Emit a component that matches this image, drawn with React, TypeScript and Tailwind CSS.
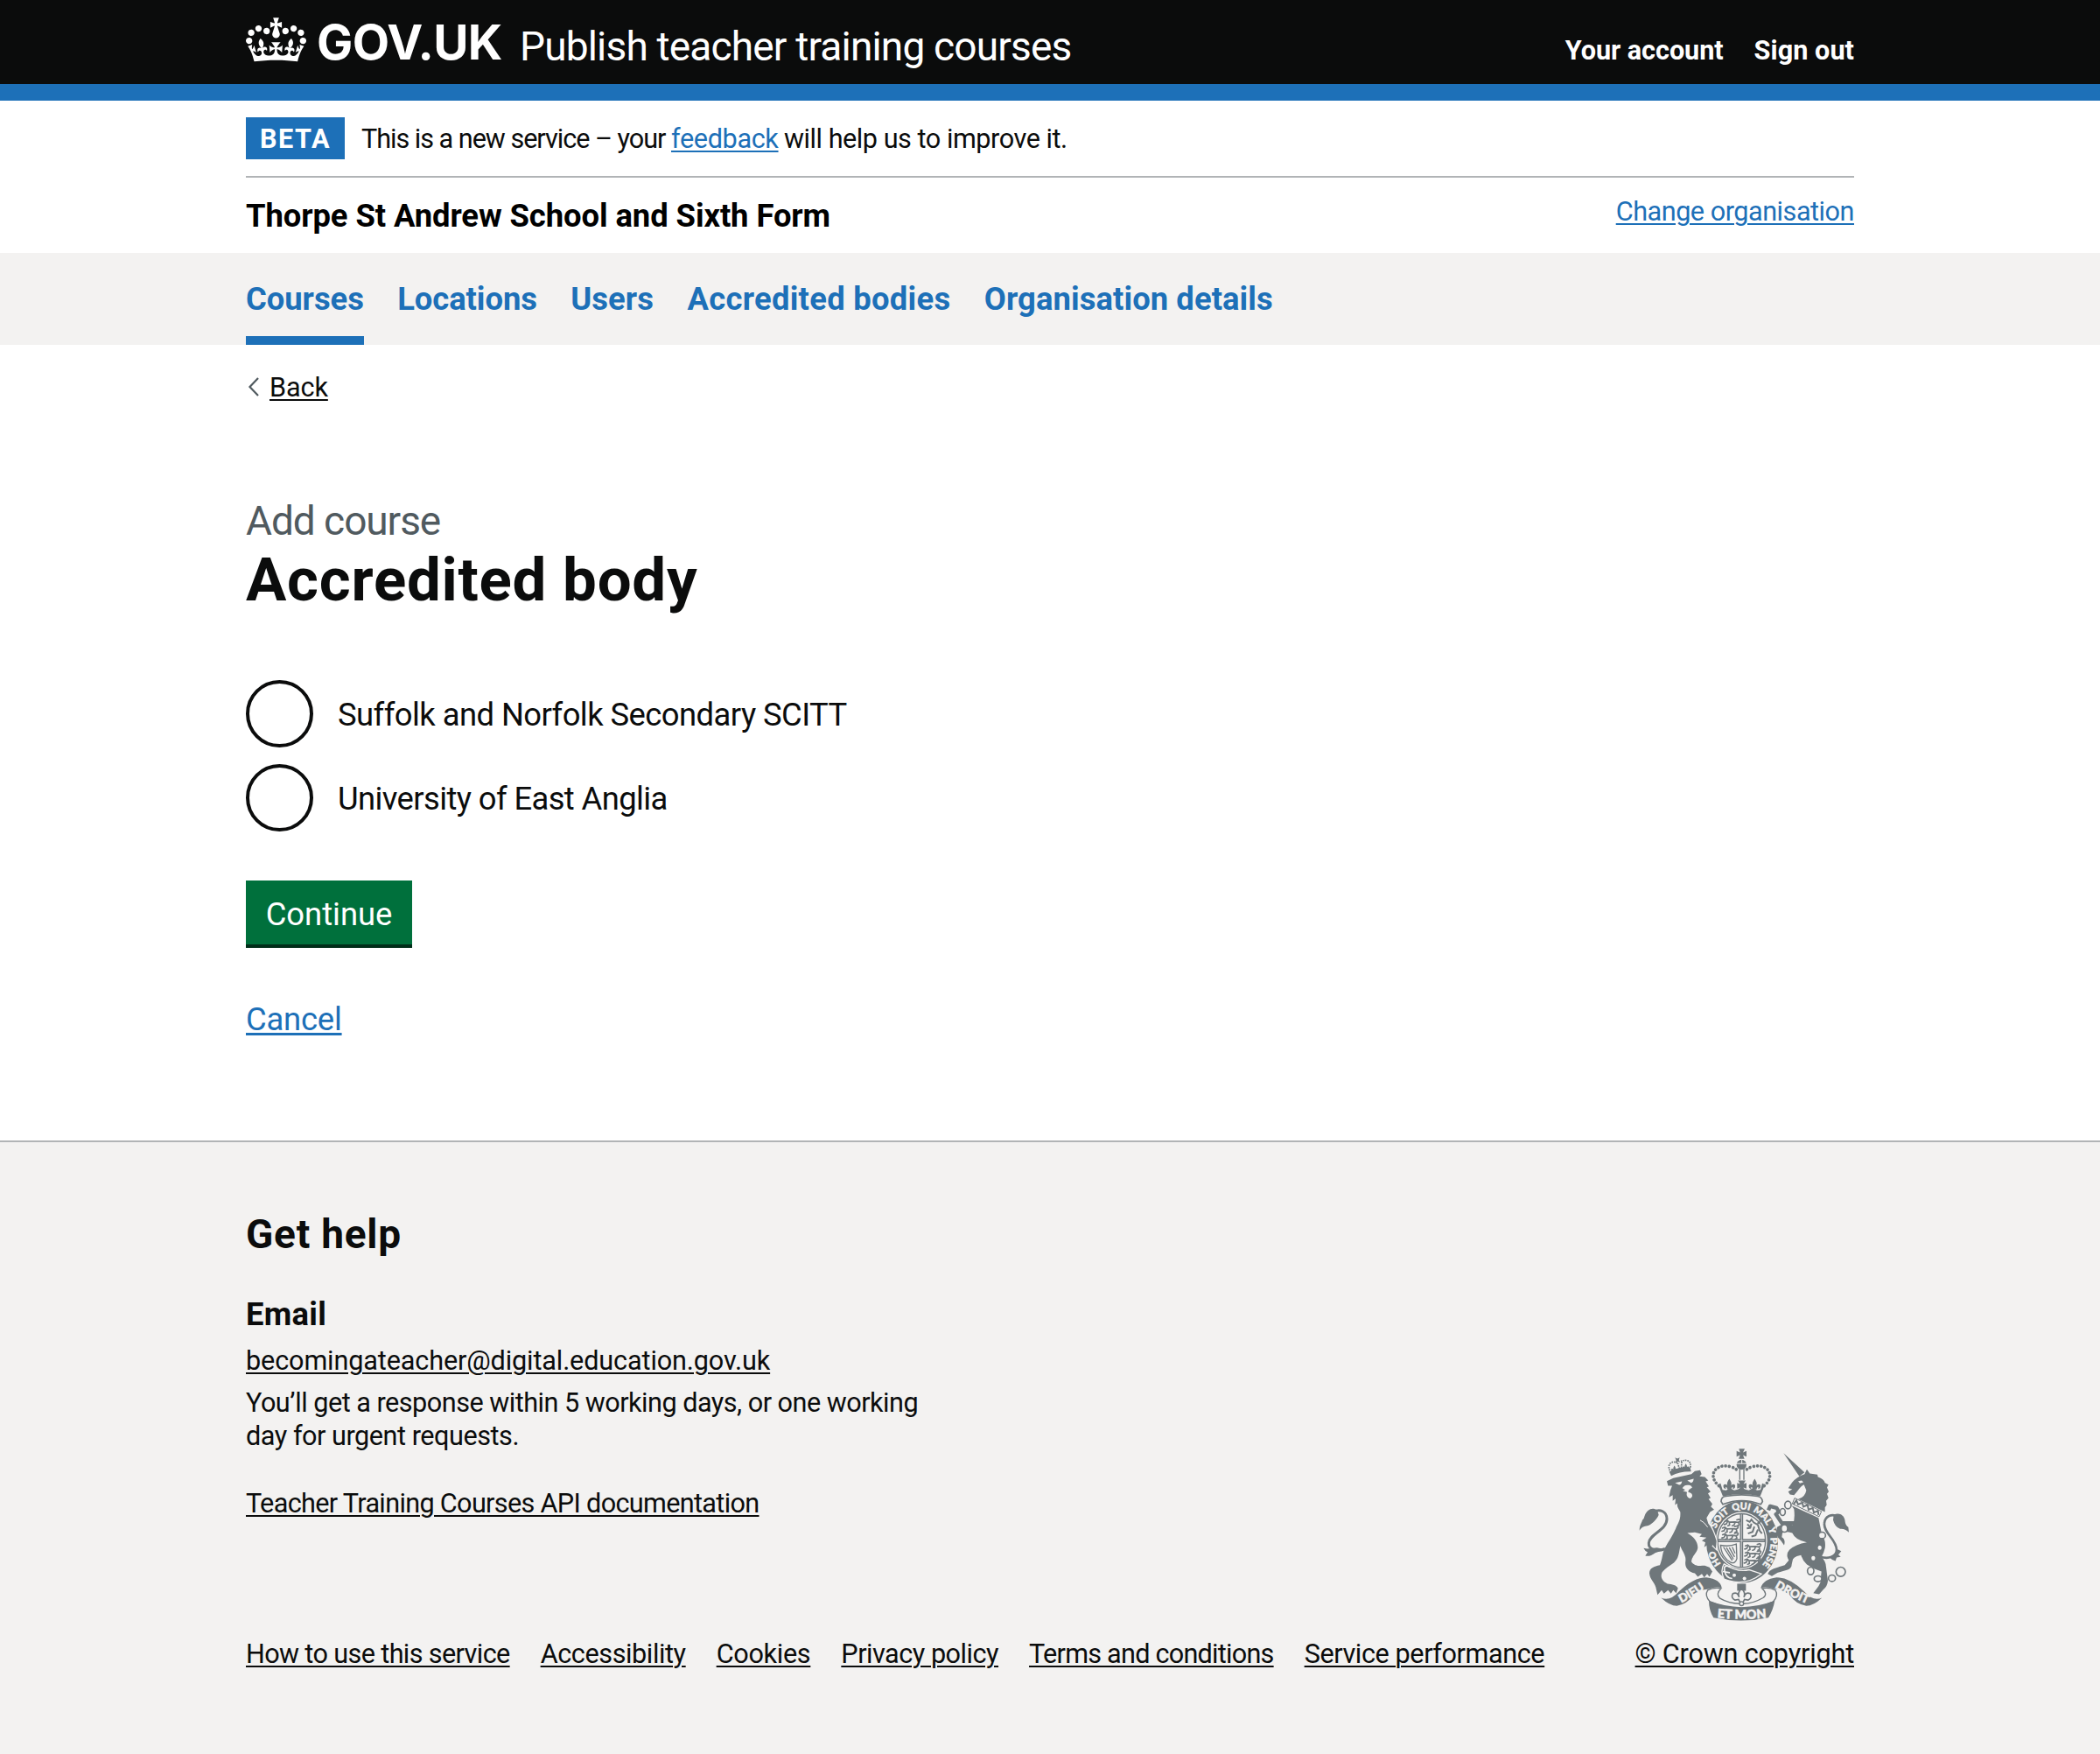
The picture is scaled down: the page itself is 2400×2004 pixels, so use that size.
import React from "react";

const link = "underline decoration-2 underline-offset-[3px]";

function Crown() {
  return (
    <svg viewBox="0 0 132 97" className="mt-5 h-[51px] w-[69px] shrink-0 fill-white" aria-hidden="true">
      <path
        fillRule="evenodd"
        d="M25 30.2c3.5 1.5 7.7-.2 9.1-3.7 1.5-3.6-.2-7.8-3.9-9.2-3.6-1.4-7.6.3-9.1 3.9-1.4 3.5.3 7.5 3.9 9zM9 39.5c3.6 1.5 7.8-.2 9.2-3.7 1.5-3.6-.2-7.8-3.9-9.1-3.6-1.5-7.6.2-9.1 3.8-1.4 3.5.3 7.5 3.8 9zM4.4 57.2c3.5 1.5 7.7-.2 9.1-3.8 1.5-3.6-.2-7.7-3.9-9.1-3.5-1.5-7.6.3-9.1 3.8-1.4 3.5.3 7.6 3.9 9.1zm38.3-21.4c3.5 1.5 7.7-.2 9.1-3.8 1.5-3.6-.2-7.7-3.9-9.1-3.6-1.5-7.6.3-9.1 3.8-1.3 3.6.4 7.7 3.9 9.1zm64.4-5.6c-3.6 1.5-7.8-.2-9.1-3.7-1.5-3.6.2-7.8 3.8-9.2 3.6-1.4 7.7.3 9.2 3.9 1.3 3.5-.4 7.5-3.9 9zm15.9 9.3c-3.6 1.5-7.7-.2-9.1-3.7-1.5-3.6.2-7.8 3.7-9.1 3.6-1.5 7.7.2 9.2 3.8 1.5 3.5-.3 7.5-3.8 9zm4.7 17.7c-3.6 1.5-7.8-.2-9.2-3.8-1.5-3.6.2-7.7 3.9-9.1 3.6-1.5 7.7.3 9.2 3.8 1.3 3.5-.4 7.6-3.9 9.1zM89.3 35.8c-3.6 1.5-7.8-.2-9.2-3.8-1.4-3.6.2-7.7 3.9-9.1 3.6-1.5 7.7.3 9.2 3.8 1.4 3.6-.3 7.7-3.9 9.1zM69.7 17.7l8.9 4.7V9.3l-8.9 2.8c-.2-.3-.5-.6-.9-.9L72.4 0H59.6l3.5 11.2c-.3.3-.6.5-.9.9l-8.8-2.8v13.1l8.8-4.7c.3.3.6.7.9.9l-5 15.4v.1c-.2.8-.4 1.6-.4 2.4 0 4.1 3.1 7.5 7 8.1h.2c.3 0 .7.1 1 .1.4 0 .7 0 1-.1h.2c4-.6 7.1-4.1 7.1-8.1 0-.8-.1-1.7-.4-2.4V34l-5.1-15.4c.4-.2.7-.6 1-.9zM66 92.8c16.9 0 32.8 1.1 47.1 3.2 4-16.9 8.9-26.7 14-33.5l-9.6-3.4c1 4.9 1.1 7.2 0 10.2-1.5-1.4-3-4.3-4.2-8.7L108.6 76c2.8-2 5-3.2 7.5-3.3-4.4 9.4-10 11.9-13.6 11.2-4.3-.8-6.3-4.6-5.6-7.9 1-4.7 5.7-5.9 8-.5 4.3-8.7-3-11.4-7.6-8.8 7.1-7.2 7.9-13.5 2.1-21.1-8 6.1-8.1 12.3-4.5 20.8-4.7-5.4-12.1-2.5-9.5 6.2 3.4-5.2 7.9-2 7.2 3.1-.6 4.3-6.4 7.8-13.5 7.2-10.3-.9-10.9-8-11.2-13.8 2.5-.5 7.1 1.8 11 7.3L80.2 60c-4.1 4.4-8 5.3-12.3 5.4 1.4-4.4 8-11.6 8-11.6H55.5s6.4 7.2 7.9 11.6c-4.2-.1-8-1-12.3-5.4l1.4 16.4c3.9-5.5 8.5-7.7 10.9-7.3-.3 5.8-.9 12.8-11.1 13.8-7.2.6-12.9-2.9-13.5-7.2-.7-5 3.8-8.3 7.1-3.1 2.7-8.7-4.6-11.6-9.4-6.2 3.7-8.5 3.6-14.7-4.6-20.8-5.8 7.6-5 13.9 2.2 21.1-4.7-2.6-11.9.1-7.7 8.8 2.3-5.5 7.1-4.2 8.1.5.7 3.3-1.3 7.1-5.7 7.9-3.5.7-9-1.8-13.5-11.2 2.5.1 4.7 1.3 7.5 3.3l-4.7-15.4c-1.2 4.4-2.7 7.2-4.3 8.7-1.1-3-.9-5.3 0-10.2l-9.5 3.4c5 6.9 9.9 16.7 14 33.5 14.8-2.1 30.8-3.2 47.7-3.2z"
      />
    </svg>
  );
}

function FleurDeLis({ x, y, scale }: { x: number; y: number; scale: number }) {
  return (
    <path
      transform={`translate(${x} ${y}) scale(${scale})`}
      d="M0-20C8-8 9-2 5 6c5-12 18-8 15 2-1 6-6 8-9 5l3-3-5-1-3 8h-12l-3-8-5 1 3 3c-3 3-8 1-9-5-3-10 10-14 15-2-4-8-3-14 5-26Z"
    />
  );
}

function WalkingLion({ x, y }: { x: number; y: number }) {
  return (
    <path
      transform={`translate(${x} ${y})`}
      fill="none"
      stroke="#6f777b"
      strokeWidth="5"
      strokeLinecap="round"
      strokeLinejoin="round"
      d="M3 2l8-3 7 6 20-1 12 2M12 3l-4 8-7 2M18 6l1 9-6 2M38 6l-4 9-6 2M50 6l2 8-6 3M50 5c8-2 8-10 2-10l-8 2"
    />
  );
}

function RoyalArms() {
  return (
    <svg viewBox="70 42 726 596" className="h-[199px] w-[242px]" fill="#6f777b" aria-hidden="true">
      {/* lion crown */}
      <path d="M174 124q32-18 72-14l3 13q-38-1-68 15Z" />
      <path d="M176 120c-10-22 6-36 26-26M246 110c6-24-14-30-32-22M203 94l8 26M217 90l-2 28" fill="none" stroke="#6f777b" strokeWidth="5" strokeDasharray="5 3" />
      <path d="M194 75l8 4 8-4-3 9 5 8-9-3-8 5 3-9Z" />
      <FleurDeLis x={192} y={114} scale={0.55} />
      <FleurDeLis x={231} y={107} scale={0.55} />
      {/* lion tail */}
      <path d="M160 388c-30 12-58 2-56-20 2-30 62-44 62-82 0-26-24-36-46-24" fill="none" stroke="#6f777b" strokeWidth="9" />
      <path d="M133 256c-18-12-34-2-42 16-4 10-2 12-9 18-2 10-10 16-10 36 10-16 20-14 32-18 12-6 28-20 34-36ZM98 388l-12-2q6 12 14 14l-8 12q16 4 34-10l34-12-28-6Z" />
      {/* garter */}
      <ellipse cx="424" cy="364" rx="123" ry="141" />
      <ellipse cx="422" cy="360" rx="88" ry="98" fill="#f3f2f1" />
      <ellipse cx="422" cy="360" rx="82" ry="92" fill="none" stroke="#6f777b" strokeWidth="4" />
      <path d="M422 268v184M340 360h164" stroke="#6f777b" strokeWidth="11" />
      <path d="M422 270v180M344 360h156" stroke="#f3f2f1" strokeWidth="2" />
      <WalkingLion x={362} y={292} />
      <WalkingLion x={354} y={315} />
      <WalkingLion x={354} y={338} />
      <WalkingLion x={432} y={376} />
      <WalkingLion x={432} y={400} />
      <WalkingLion x={430} y={424} />
      <path d="M438 290l12 6 6-8 8 10 14 8 6 20 8 10M456 302l-4 14-12 2M466 312l-6 18-16 6M478 322l-8 20-14 4M476 300q14 0 8-14M442 304l8 8" fill="none" stroke="#6f777b" strokeWidth="6" />
      <path d="M350 376q30 6 54-4l2 50q-6 20-22 12-30-16-34-58ZM360 382l30 46M370 384l24 40M380 384l18 32M390 382l10 22" fill="none" stroke="#6f777b" strokeWidth="4" />
      <defs>
        <path id="garter-line" d="M424 475A98 111 0 0 1 326 364A98 111 0 0 1 424 253A98 111 0 0 1 522 364A98 111 0 0 1 424 475" />
      </defs>
      <g fill="#f3f2f1" stroke="#f3f2f1" strokeWidth="1.4" fontFamily="Lato, sans-serif" fontWeight="900" fontSize="32" textAnchor="middle">
        <text><textPath href="#garter-line" startOffset="16.5%">HO</textPath></text>
        <text><textPath href="#garter-line" startOffset="37.5%">SOIT</textPath></text>
        <text><textPath href="#garter-line" startOffset="49.5%">QUI</textPath></text>
        <text><textPath href="#garter-line" startOffset="61%">MAL</textPath></text>
        <text><textPath href="#garter-line" startOffset="69.5%">Y</textPath></text>
        <text><textPath href="#garter-line" startOffset="80.5%">PENSE</textPath></text>
      </g>
      {/* buckle and strap end */}
      <path d="M362 440q-14 22 0 52 70 28 128-18l-42-14q-40 10-86-20Z" stroke="#f3f2f1" strokeWidth="4" />
      <path d="M384 450q-26-10-20 14 4 24 26 26M358 466l24 4" fill="none" stroke="#f3f2f1" strokeWidth="5" />
      <circle cx="397" cy="479" r="6" fill="#f3f2f1" />
      <circle cx="432" cy="490" r="6" fill="#f3f2f1" />
      {/* lion */}
      <path d="M318 250L328 256L314 264L304 282L310 300Q324 318 336 362L336 390L322 376" fill="none" stroke="#f3f2f1" strokeWidth="6" />
      <path d="M166 156L188 146L216 140L250 132L262 122L280 119L285 132L278 140L296 142L308 154L299 157L310 174L303 177L316 192L307 198L316 214L309 218L322 234L317 244L328 254L314 262L302 282L308 302Q324 320 336 362L334 388L322 374L314 387L308 372L294 383L298 366L286 360L302 350L278 347L286 338L262 332L236 334C256 346 272 362 272 384C270 402 252 412 250 432C262 450 280 446 296 446L312 452L322 466L312 484L304 474L294 486L286 474L272 484L262 472C240 468 226 452 230 430C232 408 218 396 212 378C206 410 206 420 190 436C176 446 160 456 150 468C142 484 150 500 168 508C184 510 200 512 204 524L198 540L188 530L180 542L170 530L156 542L148 530L134 546L128 520C122 500 108 494 106 472C106 454 122 448 142 444C152 420 150 400 160 384C170 366 186 344 196 320C204 300 214 290 212 262C206 250 200 246 202 232L194 238L196 216L186 224L186 204L173 212L178 188L184 172L170 172Z" />
      <path d="M194 162l24-5q-2 12-10 12ZM236 154l22-6q-2 14-9 14ZM219 180q8-12 20-10 10-2 14 8l-12 8-2 8q16 4 14 14-4 10-12 6-10-6-6-20l-14-4 8-4Z" fill="#f3f2f1" />
      <path d="M280 290q14 6 26 24" stroke="#f3f2f1" strokeWidth="3" fill="none" />
      {/* central crown */}
      <path d="M352 226q0-16 16-18 54-10 108 0 16 2 18 18l-6 10q-66-26-130 0Z" fill="#f3f2f1" stroke="#6f777b" strokeWidth="5" />
      <path d="M342 168l8-4 7 22 12 2 14-8 14 8 14-4 4-4h14l4 4 14 4 14-8 14 8 12-2 6-22 9 4-16 40q-64-14-128 0Z" />
      <FleurDeLis x={380} y={168} scale={1} />
      <FleurDeLis x={467} y={168} scale={1} />
      <path d="M410 154h26l-7 12 10-4v20l-10-4v8h-12v-8l-10 4v-20l10 4Z" />
      <path d="M344 172c-40-34-12-78 38-66q22 6 24 14M500 172c40-34 12-78-38-66q-22 6-24 14" fill="none" stroke="#6f777b" strokeWidth="11" strokeLinecap="round" strokeDasharray="0.1 12.5" />
      <path d="M416 112v40M430 112v40" stroke="#6f777b" strokeWidth="4" />
      <circle cx="422" cy="100" r="17" />
      <path d="M404 96h36M423 82v14" stroke="#f3f2f1" strokeWidth="3" />
      <path d="M413 45h20l-6 13 12-5v19l-12-5 5 13h-20l5-13-12 5V53l12 5Z" />
      {/* unicorn */}
      <path d="M566 60l72 66-18 14ZM638 132l8-16 10 14 26 4 2 8q20 6 24 20l12 6-5 10 6 14-6 8 5 14-8 10 2 14-6 8v16l-92-44q24-6 28-30l-8-20q-10 4-22 22l-12 14-14-2-6-10 14-8-14-4 14-20q14-18 42-28Z" />
      <path d="M616 156l12-2 6 6-12 4ZM628 176q10-2 12 12-8 26-30 30 22-18 18-42Z" fill="#f3f2f1" />
      <path d="M604 300L560 300L540 270Q554 262 542 248L520 242L514 256" fill="none" stroke="#6f777b" strokeWidth="13" strokeLinejoin="round" />
      <path d="M594 240l92 42 12 60q14 16 10 44-4 18-12 30 16 16 16 36l6 46q-2 20-16 30l-14 16-20-4 18-24 6-12 4-38q-28-8-50-24-14-12-20-32-22 4-28 14l-4 18q0 12-14 18l-34 10-20 12-14-8q4-12 20-18l38-12 14-16q-12-20 2-36 20-20 60-26-40-8-50-32-24-8-34 0l-2 14q14 8 8 28l-10-14-12-14-6-18 4-16 20-12 34 4q8-20 4-54Z" />
      <path d="M604 214l92 46-8 18-92-44Z" fill="#f3f2f1" stroke="#6f777b" strokeWidth="3" />
      <path d="M600 236l10-14 6 14 14-6 4 14 14-6 4 16 14-6 4 16 14-6 2 14" fill="none" stroke="#6f777b" strokeWidth="6" />
      {/* unicorn tail */}
      <path d="M690 414c30 12 58 0 58-22 0-36-46-58-42-92 2-24 26-34 46-22" fill="none" stroke="#6f777b" strokeWidth="8" />
      <path d="M738 272c18-10 34 0 38 16 2 12 2 18 12 26l2 18q-14-14-30-12-18-6-24-30ZM752 390l12 6-10 12 8 8-14 2-4 12q-14-4-22-14l22-8Z" />
      {/* chain */}
      <g fill="#f3f2f1" stroke="#6f777b" strokeWidth="5">
        <ellipse cx="581" cy="238" rx="11" ry="13" />
        <ellipse cx="563" cy="262" rx="9" ry="12" />
        <ellipse cx="569" cy="318" rx="11" ry="13" />
        <ellipse cx="698" cy="342" rx="12" ry="11" />
        <ellipse cx="690" cy="384" rx="9" ry="10" />
        <ellipse cx="668" cy="420" rx="9" ry="10" />
        <ellipse cx="659" cy="464" rx="11" ry="13" />
        <ellipse cx="684" cy="491" rx="13" ry="10" />
        <ellipse cx="732" cy="489" rx="12" ry="11" />
        <circle cx="762" cy="467" r="16" />
      </g>
      {/* motto ribbon */}
      <path d="M146 556q30 14 60-20 50-50 96-50 48 6 52 36-22-6-44 4-34 2-54 22-20 30-56 36-24 0-54-28Z" />
      <path d="M698 556q-30 14-60-20-50-50-96-50-46 6-54 36 22-6 46 4 34 2 54 22 20 30 56 36 24 0 54-28Z" />
      <path d="M352 524q-26-4-46 6-12 18 8 40 60 24 108 22 60 0 108-22 20-22 8-40-20-10-46-6 22 20 4 32-38 22-74 20-40 2-74-18-16-14 4-34Z" fill="#f3f2f1" stroke="#6f777b" strokeWidth="4" />
      <path d="M310 566q56 22 112 22t114-22q-6 34-22 58-94 20-188 0-16-24-16-58Z" />
      <defs>
        <path id="motto-left" d="M205 579Q250 558 306 518" />
        <path id="motto-mid" d="M324 623Q422 634 522 623" />
        <path id="motto-right" d="M528 516Q580 548 655 580" />
      </defs>
      <g fill="#f3f2f1" stroke="#f3f2f1" strokeWidth="1.6" fontFamily="Lato, sans-serif" fontWeight="900" fontSize="40" textAnchor="middle">
        <text><textPath href="#motto-left" startOffset="50%">DIEU</textPath></text>
        <text fontSize="43"><textPath href="#motto-mid" startOffset="50%">ET MON</textPath></text>
        <text><textPath href="#motto-right" startOffset="50%">DROIT</textPath></text>
      </g>
      {/* plant badge */}
      <path d="M407 508h30v24h-30Z" />
      <path d="M422 524q16 16 8 30 6-20 22-12 8 14-8 22l-12-2-6 12h-8l-6-12-12 2q-16-8-8-22 16-8 22 12-8-14 8-30Z" fill="#f3f2f1" stroke="#6f777b" strokeWidth="5" />
      <circle cx="422" cy="576" r="7" fill="#f3f2f1" stroke="#6f777b" strokeWidth="4" />
    </svg>
  );
}

function Radio({ children }: { children: React.ReactNode }) {
  return (
    <div className="flex h-[77px]">
      <span className="size-[77px] shrink-0 rounded-full border-4 border-[#0b0c0c]" />
      <span className="ml-[28px] pt-[2px] text-[36.4px] leading-[76px]">{children}</span>
    </div>
  );
}

export default function App() {
  return (
    <div className="h-[2004px] w-[2400px] overflow-hidden bg-white font-['Roboto',sans-serif] text-[30.6px] leading-[38px] text-[#0b0c0c]">
      <header className="h-[115px] border-b-[19px] border-[#1d70b8] bg-[#0b0c0c] px-[281px] text-white">
        <div className="flex items-start">
          <Crown />
          <span className="mt-5 ml-3 w-[212px] font-['Inter',sans-serif] text-[55px] leading-[56px] font-bold tracking-[-0.6px]">GOV.UK</span>
          <span className="mt-[30px] ml-[20px] text-[46px] leading-[46px] tracking-[-0.82px]">Publish teacher training courses</span>
          <nav className="mt-[43px] ml-auto flex gap-[35px] leading-[30px] font-bold">
            <a className="tracking-[-0.05px]">Your account</a>
            <a className="tracking-[0.06px]">Sign out</a>
          </nav>
        </div>
      </header>

      <div className="px-[281px]">
        <div className="flex h-[88px] items-start border-b-2 border-[#b1b4b6] pt-[19px] leading-[50px]">
          <strong className="h-12 w-[113px] bg-[#1d70b8] pl-4 tracking-[1.54px] text-white">BETA</strong>
          <span className="ml-[19px] flex">
            <span className="w-[354px] tracking-[-1.02px]">This is a new service – your</span>
            <a className={`${link} w-[123px] tracking-[-0.35px] text-[#1d70b8]`}>feedback</a>
            <span className="ml-[6px] tracking-[-0.45px]">will help us to improve it.</span>
          </span>
        </div>
        <div className="flex h-[86px] items-start justify-between pt-[20px]">
          <strong className="text-[36.4px] leading-[48px] tracking-[-0.08px] text-black">Thorpe St Andrew School and Sixth Form</strong>
          <a className={`${link} tracking-[-0.47px] text-[#1d70b8]`}>Change organisation</a>
        </div>
      </div>

      <nav className="flex h-[105px] gap-[38.4px] bg-[#f3f2f1] px-[281px] pt-[29px] text-[36.4px] leading-[48px] font-bold text-[#1d70b8]">
        <a className="border-b-10 border-[#1d70b8] tracking-[-0.04px]">Courses</a>
        <a className="tracking-[-0.07px]">Locations</a>
        <a className="tracking-[0.09px]">Users</a>
        <a className="tracking-[0.29px]">Accredited bodies</a>
        <a className="tracking-[0.08px]">Organisation details</a>
      </nav>

      <main className="h-[909px] px-[281px] pt-[30px]">
        <div className="flex h-[38px]">
          <svg viewBox="0 0 14 24" className="mt-[6px] ml-[2px] h-6 w-[14px]" fill="none" stroke="#505a5f" strokeWidth="2.2">
            <path d="M12 2 2.5 12 12 22" />
          </svg>
          <a className={`${link} ml-[11px] tracking-[-0.1px]`}>Back</a>
        </div>
        <h1 className="mt-[105px]">
          <span className="block text-[46px] leading-[57px] tracking-[-1.05px] text-[#505a5f]">Add course</span>
          <span className="block text-[69px] leading-[78px] font-bold tracking-[0.75px]">Accredited body</span>
        </h1>
        <div className="mt-[75px] flex flex-col gap-[19px]">
          <Radio><span className="tracking-[-0.55px]">Suffolk and Norfolk Secondary SCITT</span></Radio>
          <Radio><span className="tracking-[-0.6px]">University of East Anglia</span></Radio>
        </div>
        <button className="mt-[56px] block h-[77px] w-[190px] border-b-4 border-[#002d18] bg-[#00703c] pt-[4px] text-center text-[36.4px] leading-[70px] text-white">Continue</button>
        <a className="mt-[58px] block w-fit text-[36.4px] leading-[48px] tracking-[-0.2px] text-[#1d70b8] underline decoration-3 underline-offset-[3px]">Cancel</a>
      </main>

      <footer className="h-[701px] border-t-2 border-[#b1b4b6] bg-[#f3f2f1] px-[281px] pt-[77px]">
        <h2 className="text-[46px] leading-[57px] font-bold tracking-[0.75px]">Get help</h2>
        <h3 className="mt-[39px] text-[36.4px] leading-[48px] font-bold tracking-[0.3px]">Email</h3>
        <div className="mt-[10px] flex h-[335px] justify-between">
          <div>
            <a className={`${link} block w-fit tracking-[-0.12px]`}>becomingateacher@digital.education.gov.uk</a>
            <p className="mt-[10px]">
              <span className="block tracking-[-0.5px]">You’ll get a response within 5 working days, or one working</span>
              <span className="block tracking-[-0.46px]">day for urgent requests.</span>
            </p>
            <a className={`${link} mt-[39px] block w-fit tracking-[-0.66px]`}>Teacher Training Courses API documentation</a>
          </div>
          <div className="mr-1 pt-[118px]">
            <RoyalArms />
          </div>
        </div>
        <div className="flex gap-[35px]">
          <a className={`${link} tracking-[-0.62px]`}>How to use this service</a>
          <a className={`${link} tracking-[-0.4px]`}>Accessibility</a>
          <a className={`${link} tracking-[-0.3px]`}>Cookies</a>
          <a className={`${link} tracking-[-0.48px]`}>Privacy policy</a>
          <a className={`${link} tracking-[-0.75px]`}>Terms and conditions</a>
          <a className={`${link} tracking-[-0.4px]`}>Service performance</a>
          <a className={`${link} ml-auto tracking-[-0.17px]`}>© Crown copyright</a>
        </div>
      </footer>
    </div>
  );
}
